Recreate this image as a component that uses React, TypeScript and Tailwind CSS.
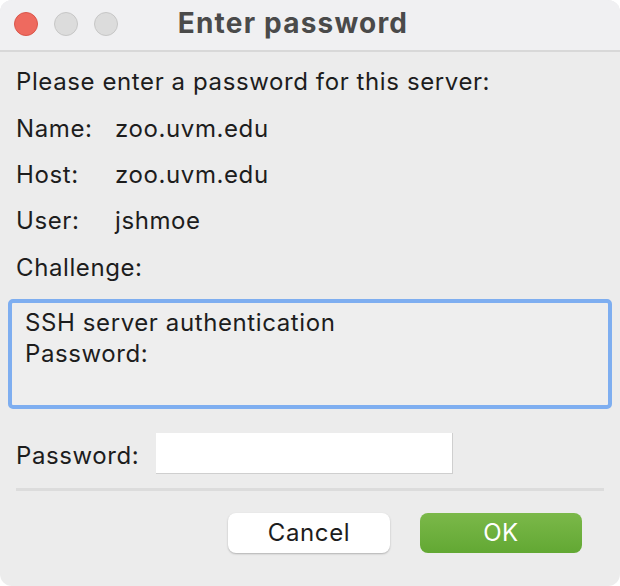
export default function App() {
  return (
    <div className="w-[620px] h-[586px] bg-white font-['Inter',sans-serif]">
      <div className="w-full h-full rounded-[12px] overflow-hidden bg-[#ececec] flex flex-col">
        {/* Title bar */}
        <div className="h-[52px] shrink-0 bg-[#f0f0f2] border-b-2 border-[#d8d8d8] relative flex items-center justify-center">
          <div className="absolute left-[14px] top-[12px] flex gap-[16px]">
            <span className="w-[24px] h-[24px] rounded-full bg-[#ee6a5f] border border-[#d9564b]"></span>
            <span className="w-[24px] h-[24px] rounded-full bg-[#dcdcdc] border border-[#c6c6c6]"></span>
            <span className="w-[24px] h-[24px] rounded-full bg-[#dcdcdc] border border-[#c6c6c6]"></span>
          </div>
          <span className="text-[28px] font-bold tracking-[1.2px] text-[#4a4a4a] mr-[34px] -mt-[4px]">Enter password</span>
        </div>

        {/* Body */}
        <div className="flex-1 flex flex-col text-[24px] tracking-[0.6px] text-[#1d1d1d]">
          <div className="px-[16px] pt-[6px] flex flex-col">
            <div className="h-[47px] flex items-center">Please enter a password for this server:</div>
            <div className="h-[47px] flex items-center">
              <span className="w-[99px]">Name:</span>
              <span>zoo.uvm.edu</span>
            </div>
            <div className="h-[46px] flex items-center">
              <span className="w-[99px]">Host:</span>
              <span>zoo.uvm.edu</span>
            </div>
            <div className="h-[46px] flex items-center">
              <span className="w-[99px]">User:</span>
              <span>jshmoe</span>
            </div>
            <div className="h-[47px] flex items-center">Challenge:</div>
          </div>

          <div className="mx-[8px] mt-[8px] h-[110px] rounded-[5px] border-[4px] border-[#7eaef0] bg-[#eeeeee] px-[13px] pt-[4px] leading-[31px]">
            <div>SSH server authentication</div>
            <div>Password:</div>
          </div>

          <div className="flex items-center px-[16px] mt-[24px]">
            <span className="w-[140px] mt-[4px]">Password:</span>
            <input
              type="password"
              className="w-[297px] h-[41px] bg-white border-b border-r border-[#cfcfcf] outline-none"
            />
          </div>

          <div className="mx-[16px] mt-[14px] h-[3px] bg-[#dcdcdc]"></div>

          <div className="flex justify-end gap-[30px] pr-[38px] mt-[22px]">
            <button className="w-[162px] h-[40px] rounded-[8px] bg-white shadow-[0_1px_2px_rgba(0,0,0,0.25)] text-[#1d1d1d]">
              Cancel
            </button>
            <button className="w-[162px] h-[40px] rounded-[8px] bg-gradient-to-b from-[#7bb849] to-[#62a833] text-white">
              OK
            </button>
          </div>
        </div>
      </div>
    </div>
  );
}
